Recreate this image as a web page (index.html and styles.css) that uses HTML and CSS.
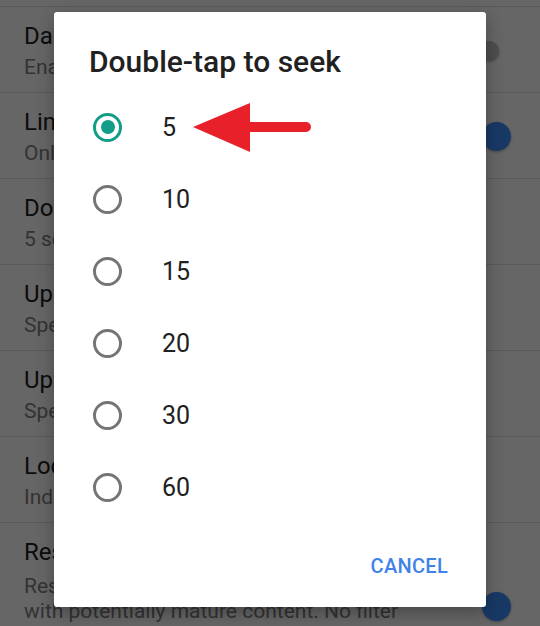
FILE: index.html
```html
<!DOCTYPE html>
<html lang="en">
<head>
    <meta charset="UTF-8">
    <meta name="viewport" content="width=device-width, initial-scale=1.0">
    <title>Settings - General</title>
    <link rel="stylesheet" href="styles.css">
</head>
<body>
    <ul class="settings">
        <li class="setting">
            <div class="setting-text">
                <p class="setting-title">Remind me when it's bedtime</p>
                <p class="setting-sub">Off</p>
            </div>
        </li>
        <li class="setting">
            <div class="setting-text">
                <p class="setting-title">Dark theme</p>
                <p class="setting-sub">Enable dark theme</p>
            </div>
            <span class="switch"><span class="thumb"></span></span>
        </li>
        <li class="setting">
            <div class="setting-text">
                <p class="setting-title">Limit mobile data usage</p>
                <p class="setting-sub">Only stream HD video on Wi-Fi</p>
            </div>
            <span class="switch on"><span class="thumb"></span></span>
        </li>
        <li class="setting">
            <div class="setting-text">
                <p class="setting-title">Double-tap to seek</p>
                <p class="setting-sub">5 seconds</p>
            </div>
        </li>
        <li class="setting">
            <div class="setting-text">
                <p class="setting-title">Uploads</p>
                <p class="setting-sub">Specify network preferences for uploads</p>
            </div>
        </li>
        <li class="setting">
            <div class="setting-text">
                <p class="setting-title">Upload quality</p>
                <p class="setting-sub">Specify quality for uploads</p>
            </div>
        </li>
        <li class="setting">
            <div class="setting-text">
                <p class="setting-title">Location</p>
                <p class="setting-sub">India</p>
            </div>
        </li>
        <li class="setting">
            <div class="setting-text">
                <p class="setting-title">Restricted Mode</p>
                <p class="setting-sub long">Restricted Mode helps hide videos<br>with potentially mature content. No filter<br>is 100% accurate. This setting only<br>applies to this app on this device.</p>
            </div>
            <span class="switch on"><span class="thumb"></span></span>
        </li>
    </ul>

    <div class="scrim"></div>

    <div class="dialog">
        <h2 class="dialog-title">Double-tap to seek</h2>
        <ul class="options">
            <li class="option"><span class="radio checked"></span><span>5</span></li>
            <li class="option"><span class="radio"></span><span>10</span></li>
            <li class="option"><span class="radio"></span><span>15</span></li>
            <li class="option"><span class="radio"></span><span>20</span></li>
            <li class="option"><span class="radio"></span><span>30</span></li>
            <li class="option"><span class="radio"></span><span>60</span></li>
        </ul>
        <div class="dialog-actions">
            <button class="text-button">CANCEL</button>
        </div>
    </div>

    <!-- red pointer next to the selected value -->
    <svg class="pointer" width="130" height="58" viewBox="0 0 130 58">
        <line x1="60" y1="29" x2="120" y2="29" stroke="#e8202a" stroke-width="10" stroke-linecap="round"/>
        <polygon points="7,29 64,5 64,54" fill="#e8202a"/>
    </svg>
</body>
</html>
```

FILE: styles.css
```css
* { margin: 0; padding: 0; box-sizing: border-box; }
body {
    font-family: Roboto, 'Noto Sans', sans-serif;
    background-color: #fff;
    width: 540px;
    height: 626px;
    overflow: hidden;
    position: relative;
}

/* settings list behind the dialog (scrolled a bit) */
.settings {
    list-style: none;
    margin-top: -79px;
}
.setting {
    display: flex;
    align-items: center;
    padding: 15px 0 13px 24px;
    border-bottom: 1px solid #e0e0e0;
}
.setting-text {
    flex: 1;
    white-space: nowrap;
    overflow: hidden;
}
.setting-title {
    font-size: 24px;
    line-height: 28px;
    color: #212121;
}
.setting-sub {
    margin-top: 5px;
    font-size: 21px;
    line-height: 24px;
    color: #808080;
}
.setting-sub.long {
    margin-top: 8px;
    line-height: 25px;
}
.switch {
    display: flex;
    align-items: center;
    justify-content: flex-start;
    width: 42px;
    height: 30px;
    margin-right: 24px;
    padding: 0 5px;
}
.switch .thumb {
    width: 20px;
    height: 20px;
    border-radius: 50%;
    background-color: #c4c4c4;
    box-shadow: 0 1px 3px rgba(0, 0, 0, 0.3);
}
.switch.on { justify-content: flex-end; }
.switch.on .thumb {
    width: 29px;
    height: 29px;
    background-color: #3d8ffd;
}

.scrim {
    position: absolute;
    top: 0;
    left: 0;
    right: 0;
    bottom: 0;
    background-color: rgba(0, 0, 0, 0.6);
}

/* single choice dialog */
.dialog {
    position: absolute;
    left: 54px;
    top: 12px;
    width: 432px;
    background-color: #fff;
    border-radius: 3px;
    box-shadow: 0 6px 18px rgba(0, 0, 0, 0.3);
    padding: 32px 0 29px;
}
.dialog-title {
    padding-left: 35px;
    font-size: 30px;
    line-height: 36px;
    font-weight: 500;
    color: #212121;
}
.options {
    list-style: none;
    margin-top: 11px;
}
.option {
    display: flex;
    align-items: center;
    gap: 40px;
    height: 72px;
    padding-left: 39px;
    font-size: 25px;
    color: #212121;
}
.radio {
    display: flex;
    align-items: center;
    justify-content: center;
    width: 29px;
    height: 29px;
    border: 3px solid #757575;
    border-radius: 50%;
}
.radio.checked { border-color: #129d89; }
.radio.checked::after {
    content: '';
    width: 14px;
    height: 14px;
    border-radius: 50%;
    background-color: #129d89;
}
.dialog-actions {
    display: flex;
    justify-content: flex-end;
    margin-top: 31px;
    padding-right: 38px;
}
.text-button {
    border: none;
    background: none;
    font-family: inherit;
    font-size: 20px;
    line-height: 24px;
    font-weight: 500;
    letter-spacing: 0.3px;
    color: #3f83e8;
}

.pointer {
    position: absolute;
    left: 186px;
    top: 98px;
}
```
